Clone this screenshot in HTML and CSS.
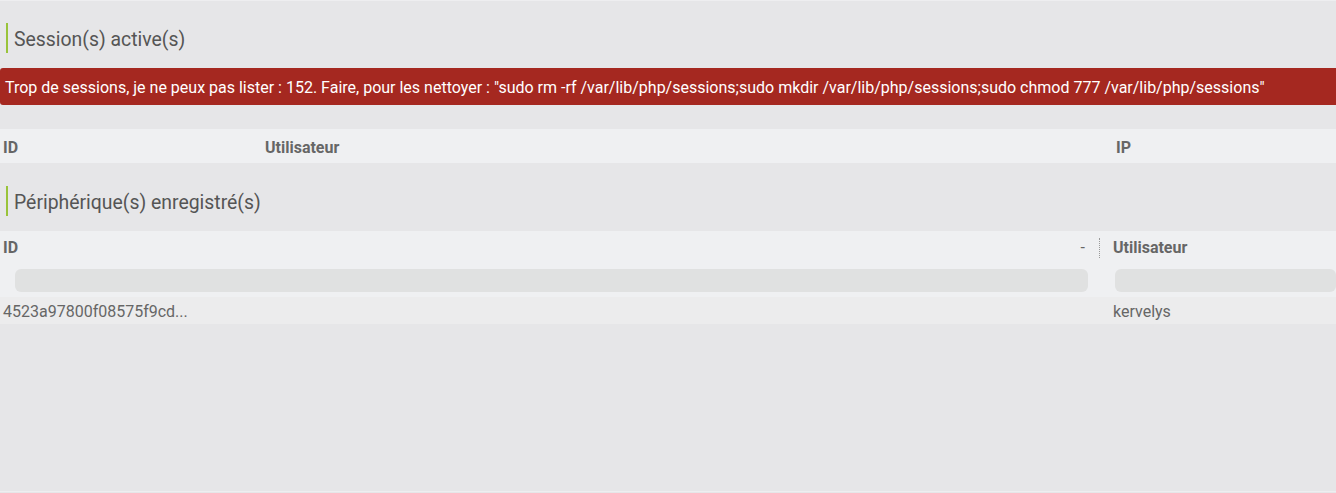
FILE: index.html
```html
<!DOCTYPE html>
<html lang="fr">
<head>
<meta charset="utf-8">
<title>Sessions</title>
<link rel="stylesheet" href="styles.css">
</head>
<body>
<div class="page">
  <div class="section-title"><h3>Session(s) active(s)</h3></div>
  <div class="alert">Trop de sessions, je ne peux pas lister : 152. Faire, pour les nettoyer : "sudo rm -rf /var/lib/php/sessions;sudo mkdir /var/lib/php/sessions;sudo chmod 777 /var/lib/php/sessions"</div>
  <div class="table1">
    <div class="th c-id">ID</div>
    <div class="th c-user">Utilisateur</div>
    <div class="th c-ip">IP</div>
  </div>
  <div class="section-title second"><h3>Périphérique(s) enregistré(s)</h3></div>
  <div class="table2">
    <div class="head">
      <div class="h-id"><span>ID</span><span class="sort">-</span></div>
      <div class="h-user"><span>Utilisateur</span></div>
    </div>
    <div class="filters">
      <div class="f-id"><div class="input"></div></div>
      <div class="f-user"><div class="input"></div></div>
    </div>
    <div class="row">
      <div class="d-id">4523a97800f08575f9cd...</div>
      <div class="d-user">kervelys</div>
    </div>
  </div>
</div>
</body>
</html>
```

FILE: styles.css
```css
html, body {
  margin: 0;
  padding: 0;
  background: #e6e6e8;
  height: 100%;
  overflow: hidden;
}
body {
  font-family: Roboto, "Liberation Sans", sans-serif;
  color: #666;
}
.page {
  border-top: 1px solid #eeeef0;
  border-bottom: 1px solid #eeeef0;
  height: 492px;
  box-sizing: border-box;
  overflow: hidden;
}
.section-title {
  padding-left: 6px;
  margin-top: 22px;
}
.section-title.second {
  margin-top: 23px;
}
.section-title h3 {
  margin: 0;
  border-left: 2px solid #99c33a;
  padding-left: 6px;
  padding-top: 4px;
  font-weight: 400;
  font-size: 19.4px;
  line-height: 26px;
  color: #555;
}
.alert {
  margin-top: 15px;
  background: #a52820;
  color: #fff;
  font-size: 16px;
  line-height: 35px;
  height: 37px;
  padding-top: 2px;
  box-sizing: border-box;
  padding-left: 5px;
  border-radius: 3px 0 0 3px;
  white-space: nowrap;
}
.table1 {
  margin-top: 24px;
  display: grid;
  grid-template-columns: 262px 851px 1fr;
  background: #eff0f2;
  height: 34px;
  padding-top: 2px;
  box-sizing: border-box;
  align-items: center;
}
.th {
  font-weight: 700;
  font-size: 16px;
  padding-left: 3px;
  color: #666;
}
.table2 {
  margin-top: 15px;
}
.table2 .head, .table2 .filters, .table2 .row {
  display: grid;
  grid-template-columns: 1100px 1fr;
}
.table2 .head, .table2 .filters {
  background: #eff0f2;
}
.head {
  height: 32px;
  padding-top: 2px;
  box-sizing: border-box;
  align-items: center;
  font-weight: 700;
  font-size: 16px;
}
.h-id {
  display: flex;
  justify-content: space-between;
  padding-left: 3px;
  padding-right: 14px;
  border-right: 1px dotted #999;
  height: 20px;
  line-height: 20px;
}
.h-user {
  padding-left: 13px;
  line-height: 20px;
}
.sort {
  font-weight: 400;
}
.filters {
  height: 34px;
  padding-top: 6px;
  box-sizing: border-box;
}
.f-id {
  padding-left: 15px;
  padding-right: 12px;
}
.f-user {
  padding-left: 15px;
}
.input {
  height: 23px;
  background: #e0e1e1;
  border-radius: 6px;
}
.row {
  background: #ececed;
  height: 27px;
  padding-top: 2px;
  box-sizing: border-box;
  align-items: center;
  font-size: 16px;
  color: #666;
}
.d-id {
  padding-left: 3px;
}
.d-user {
  padding-left: 13px;
}
```
